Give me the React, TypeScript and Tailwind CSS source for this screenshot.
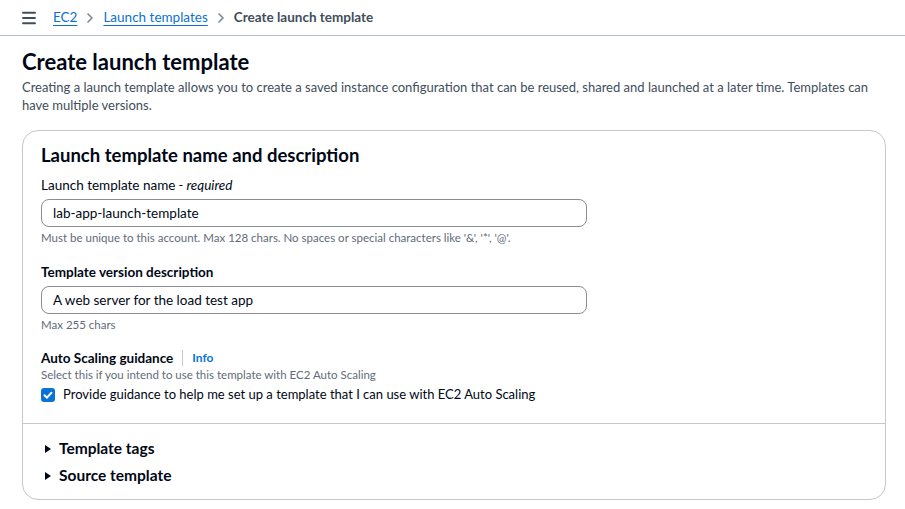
import { Menu, ChevronRight } from "lucide-react";

const font = { fontFamily: 'Lato, "Noto Sans", Arial, sans-serif' };

function Breadcrumbs() {
  return (
    <div className="flex h-[36px] items-center border-b border-[#b6bec9] pl-[20px]">
      <Menu className="h-[18px] w-[18px] text-[#414d5c]" strokeWidth={2.5} />
      <nav className="ml-[15px] flex items-center text-[13.5px]">
        <a href="#" className="text-[#0972d3] underline underline-offset-[3px]">
          EC2
        </a>
        <ChevronRight className="mx-[5px] h-[16px] w-[16px] text-[#7d8998]" strokeWidth={2.5} />
        <a href="#" className="text-[#0972d3] underline underline-offset-[3px]">
          Launch templates
        </a>
        <ChevronRight className="mx-[5px] h-[16px] w-[16px] text-[#7d8998]" strokeWidth={2.5} />
        <span className="font-bold text-[#414d5c]">Create launch template</span>
      </nav>
    </div>
  );
}

function Field({
  label,
  italic,
  bold,
  value,
  hint,
}: {
  label: string;
  italic?: string;
  bold?: boolean;
  value: string;
  hint: string;
}) {
  return (
    <div>
      <div className={`text-[13.5px] leading-[20px] text-[#000716] ${bold ? "font-bold" : ""}`}>
        {label}
        {italic && <i> - {italic}</i>}
      </div>
      <div className="mt-[4px] flex h-[28px] w-[546px] items-center rounded-[8px] border border-[#8c8c94] px-[11px] text-[13.5px] text-[#000716]">
        {value}
      </div>
      <div className="mt-[3px] text-[11.5px] leading-[16px] text-[#5f6b7a]">{hint}</div>
    </div>
  );
}

export default function App() {
  return (
    <div className="min-h-screen bg-white" style={font}>
      <Breadcrumbs />
      <main className="px-[22px] pt-[12px]">
        <h1 className="text-[22px] font-bold leading-[28px] text-[#000716]">Create launch template</h1>
        <p className="mt-[2px] text-[13px] leading-[18px] text-[#414d5c]">
          Creating a launch template allows you to create a saved instance configuration that can be reused, shared and
          launched at a later time. Templates can have multiple versions.
        </p>

        <section className="mt-[16px] w-[864px] rounded-[16px] border border-[#c6c6cd]">
          <div className="px-[18px] pb-[18px] pt-[12px]">
            <h2 className="text-[18.5px] font-bold leading-[24px] text-[#000716]">Launch template name and description</h2>
            <div className="mt-[8px]">
              <Field
                label="Launch template name"
                italic="required"
                value="lab-app-launch-template"
                hint="Must be unique to this account. Max 128 chars. No spaces or special characters like '&', '*', '@'."
              />
            </div>
            <div className="mt-[16px]">
              <Field bold label="Template version description" value="A web server for the load test app" hint="Max 255 chars" />
            </div>
            <div className="mt-[15px]">
              <div className="flex items-center text-[13.5px] leading-[20px]">
                <span className="font-bold text-[#000716]">Auto Scaling guidance</span>
                <span className="mx-[9px] h-[16px] w-px bg-[#c6c6cd]" />
                <a href="#" className="text-[12px] font-bold text-[#0972d3]">
                  Info
                </a>
              </div>
              <div className="text-[11.5px] leading-[14px] text-[#5f6b7a]">
                Select this if you intend to use this template with EC2 Auto Scaling
              </div>
              <label className="mt-[3px] flex items-center text-[13px] text-[#000716]">
                <span className="flex h-[14px] w-[14px] items-center justify-center rounded-[3px] bg-[#0972d3]">
                  <svg viewBox="0 0 14 14" className="h-[14px] w-[14px]" fill="none">
                    <path d="M3.5 7.2 6 9.7l4.5-5" stroke="white" strokeWidth="2" strokeLinecap="round" strokeLinejoin="round" />
                  </svg>
                </span>
                <span className="ml-[8px]">Provide guidance to help me set up a template that I can use with EC2 Auto Scaling</span>
              </label>
            </div>
          </div>
          <div className="border-t border-[#c6c6cd] px-[20px] pb-[9px] pt-[12px]">
            {["Template tags", "Source template"].map((t) => (
              <div key={t} className="flex h-[27px] items-center text-[15.5px] font-bold text-[#000716]">
                <svg viewBox="0 0 10 10" className="mr-[6px] h-[10px] w-[10px]">
                  <path d="M2 1l6 4-6 4z" fill="#000716" />
                </svg>
                {t}
              </div>
            ))}
          </div>
        </section>
      </main>
    </div>
  );
}
